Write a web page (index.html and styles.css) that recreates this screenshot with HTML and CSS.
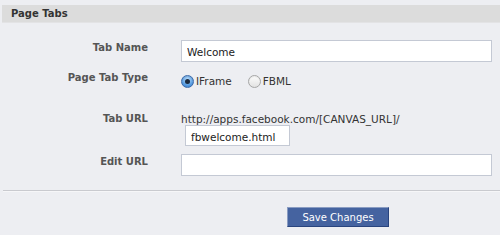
FILE: index.html
```html
<!DOCTYPE html>
<html lang="en">
<head>
    <meta charset="UTF-8">
    <title>Page Tabs</title>
    <link rel="stylesheet" href="styles.css">
</head>
<body>
    <div class="panel">
        <div class="section-title">Page Tabs</div>

        <div class="form">
            <div class="label">Tab Name</div>
            <div class="field">
                <input type="text" class="text-input wide" value="Welcome">
            </div>

            <div class="label">Page Tab Type</div>
            <div class="field radios">
                <label class="radio"><span class="dot checked"></span>IFrame</label>
                <label class="radio"><span class="dot"></span>FBML</label>
            </div>

            <div class="label label-url">Tab URL</div>
            <div class="field field-url">
                <div class="url-prefix">http://apps.facebook.com/[CANVAS_URL]/</div>
                <input type="text" class="text-input short" value="fbwelcome.html">
            </div>

            <div class="label">Edit URL</div>
            <div class="field">
                <input type="text" class="text-input wide" value="">
            </div>
        </div>

        <div class="separator"></div>

        <div class="actions">
            <button class="btn-save">Save Changes</button>
        </div>
    </div>
</body>
</html>
```

FILE: styles.css
```css
body {
    margin: 0;
    background: #edeef2;
    font-family: "DejaVu Sans", Verdana, sans-serif;
    font-size: 10.5px;
    color: #333;
}
.panel {
    padding: 5px 0 0 2px;
}
.section-title {
    height: 17px;
    line-height: 17px;
    padding-left: 9px;
    background: #dcdcdc;
    border-bottom: 1px solid #e3e3e5;
    font-size: 10px;
    font-weight: bold;
    color: #333;
}
.form {
    display: grid;
    grid-template-columns: 146px 311px;
    column-gap: 33px;
    row-gap: 8px;
    padding-top: 17px;
}
.label {
    text-align: right;
    font-size: 10px;
    font-weight: bold;
    color: #555;
    line-height: 14px;
    padding-top: 1px;
}
.label-url {
    padding-top: 14px;
}
.text-input {
    box-sizing: border-box;
    height: 22px;
    margin: 0;
    padding: 2px 5px 0;
    border: 1px solid #c4c9d4;
    background: #fff;
    font-family: "DejaVu Sans", Verdana, sans-serif;
    font-size: 10.5px;
    color: #222;
    outline: none;
}
.wide {
    width: 311px;
    display: block;
}
.short {
    width: 105px;
    height: 21px;
    margin-left: 4px;
    display: block;
}
.radios {
    display: flex;
    align-items: center;
    gap: 16px;
    height: 18px;
    padding-top: 2px;
}
.radio {
    display: flex;
    align-items: center;
    gap: 2px;
    font-size: 10.5px;
    color: #333;
}
.dot {
    box-sizing: border-box;
    width: 13px;
    height: 13px;
    border-radius: 50%;
    border: 1px solid #a6a6a6;
    background: linear-gradient(#fdfdfd, #e2e2e2);
    box-shadow: inset 0 1px 1px rgba(0,0,0,0.08);
    position: relative;
}
.dot.checked {
    border-color: #3c6aa9;
    background: radial-gradient(circle at 50% 30%, #b9dcfb 0%, #5c9fe2 60%, #2d74c8 100%);
}
.dot.checked::after {
    content: "";
    position: absolute;
    left: 3px;
    top: 3px;
    width: 5px;
    height: 5px;
    border-radius: 50%;
    background: #1b2a3f;
}
.field-url {
    padding-top: 14px;
}
.url-prefix {
    line-height: 14px;
    color: #333;
}
.short + * {
    margin-top: 0;
}
.field-url .short {
    margin-top: -1px;
}
.separator {
    margin: 14px 0 0 1px;
    height: 1px;
    background: #c9cacf;
    border-bottom: 1px solid #f6f6f8;
}
.actions {
    padding: 15px 0 0 285px;
}
.btn-save {
    box-sizing: border-box;
    width: 102px;
    height: 20px;
    margin: 0;
    padding: 0;
    background: #4563a0;
    border: 1px solid #29447e;
    border-top-color: #8a9cc2;
    border-left-color: #8a9cc2;
    color: #fff;
    font-family: "DejaVu Sans", Verdana, sans-serif;
    font-size: 10px;
    cursor: pointer;
}
```
